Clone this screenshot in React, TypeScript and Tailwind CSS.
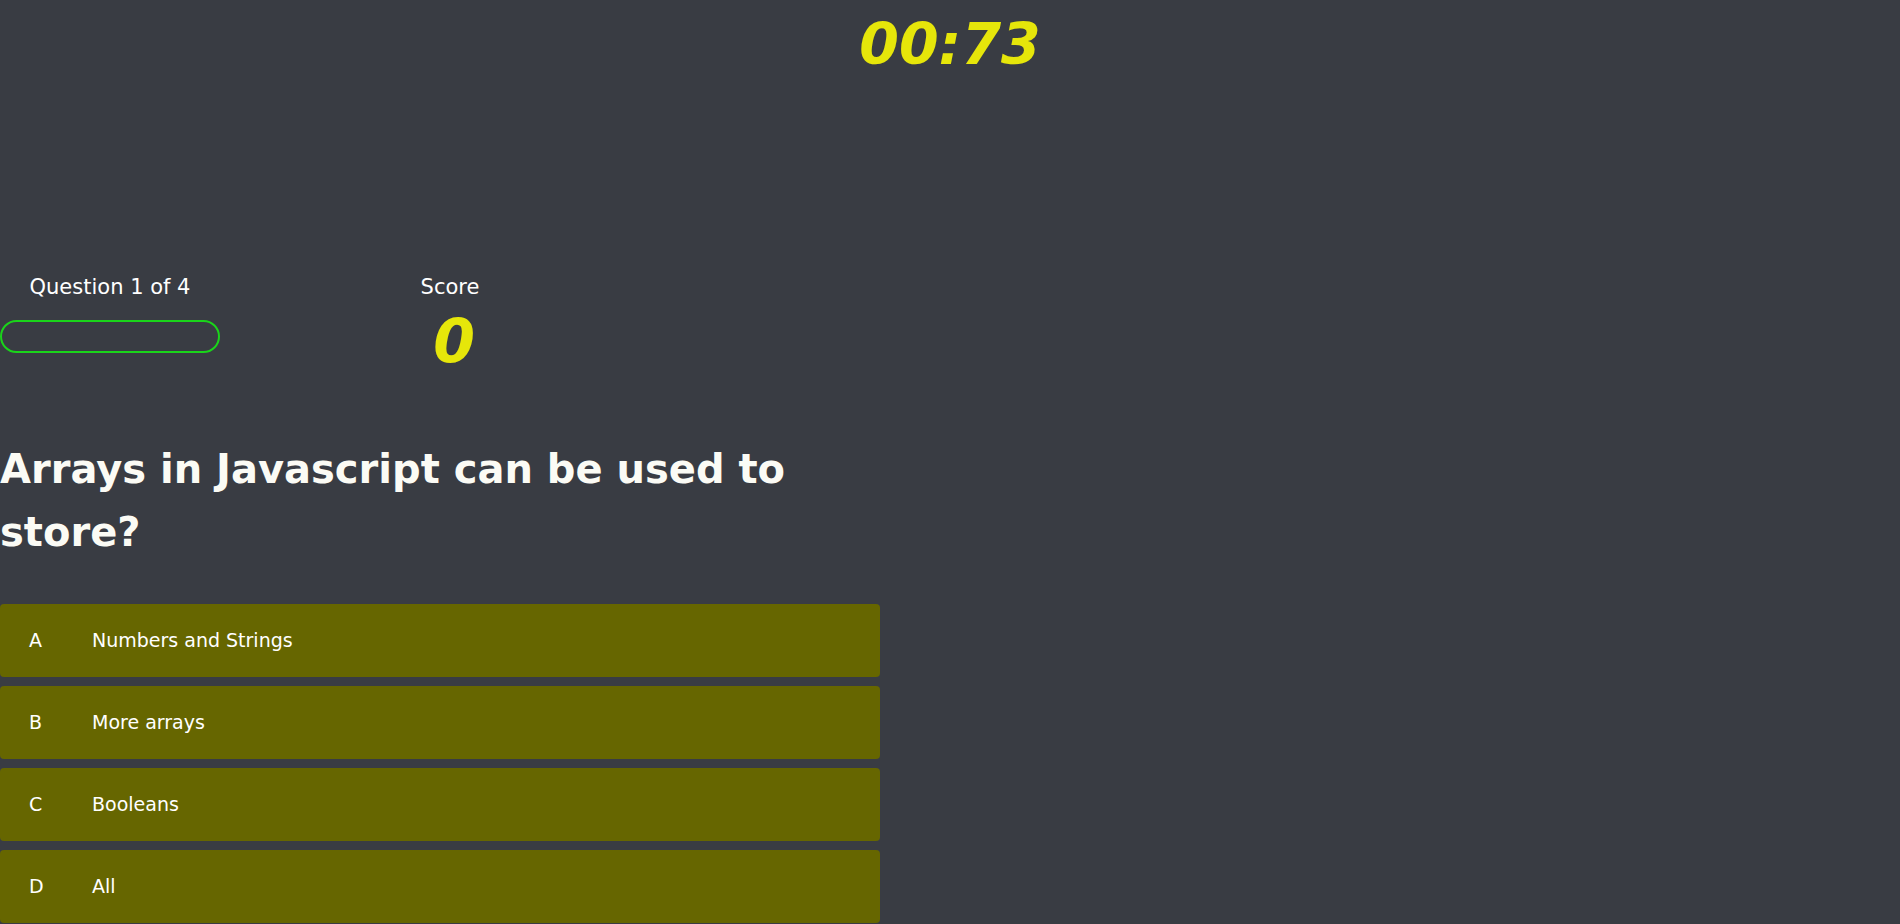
import React from "react";

const options = [
  { k: "A", t: "Numbers and Strings" },
  { k: "B", t: "More arrays" },
  { k: "C", t: "Booleans" },
  { k: "D", t: "All" },
];

export default function App() {
  return (
    <div
      className="min-h-screen w-full bg-[#393c43] text-white"
      style={{ fontFamily: '"Comic Sans MS", "DejaVu Sans", sans-serif' }}
    >
      <div className="h-[250px] pt-[4px] text-center">
        <span className="text-[57px] leading-[80px] font-bold italic text-[#e6e60a]">00:73</span>
      </div>
      <div className="flex">
        <div className="w-[220px] flex flex-col items-center">
          <div className="text-[21px] leading-[30px] pt-[22px]">Question 1 of 4</div>
          <div className="mt-[18px] h-[33px] w-[220px] rounded-full border-2 border-[#1ad41a]" />
        </div>
        <div className="w-[200px] ml-[130px] flex flex-col items-center">
          <div className="text-[21px] leading-[30px] pt-[22px]">Score</div>
          <div className="mt-[7px] pl-[8px] text-[60px] leading-[64px] font-bold italic text-[#e6e60a]">0</div>
        </div>
      </div>
      <div className="w-[880px]">
        <h1 className="mt-[65px] text-[40px] leading-[63px] font-bold text-[#fbfbf5]">
          Arrays in Javascript can be used to store?
        </h1>
        <div className="mt-[40px] flex flex-col gap-[9px]">
          {options.map((o) => (
            <div key={o.k} className="h-[73px] rounded bg-[#666600] flex items-center text-[19px]">
              <span className="w-[92px] pl-[29px]">{o.k}</span>
              <span>{o.t}</span>
            </div>
          ))}
        </div>
      </div>
    </div>
  );
}
